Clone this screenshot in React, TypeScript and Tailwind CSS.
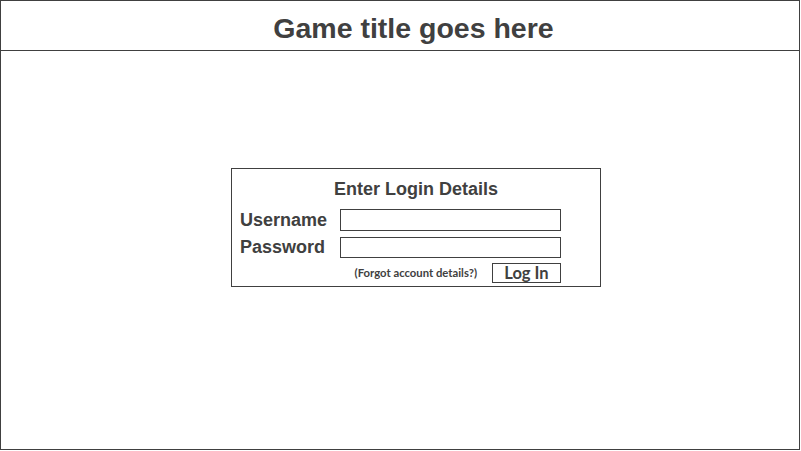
export default function App() {
  return (
    <div className="w-[800px] h-[450px] border border-[#404040] bg-white flex flex-col font-['Liberation_Sans',Arial,sans-serif] text-[#404040]">
      {/* header */}
      <div className="h-[50px] shrink-0 border-b border-[#404040] flex items-center justify-center">
        <h1 className="text-[28.5px] font-bold leading-none pt-[6px] pl-[27px]">Game title goes here</h1>
      </div>

      {/* login panel */}
      <div className="flex-1 pl-[230px] pt-[117px]">
        <div className="w-[370px] h-[119px] border border-[#404040] pl-[8px] pr-[39px] pt-[9px]">
          <div className="text-[18px] font-bold leading-[22px] text-center pl-[31px]">Enter Login Details</div>
          <div className="mt-[9px] flex flex-col gap-[5px]">
            <div className="flex items-center">
              <label className="w-[100px] text-[18px] font-bold leading-[22px]">Username</label>
              <input className="w-[221px] h-[22px] border border-[#404040] outline-none" />
            </div>
            <div className="flex items-center">
              <label className="w-[100px] text-[18px] font-bold leading-[22px]">Password</label>
              <input type="password" className="w-[221px] h-[21px] border border-[#404040] outline-none" />
            </div>
          </div>
          <div className="mt-[5px] flex items-center justify-end gap-[15px] font-['Lato','Open_Sans',sans-serif] font-bold">
            <span className="text-[11.3px] leading-none">(Forgot account details?)</span>
            <button className="w-[69px] h-[20px] border border-[#404040] text-[16.5px] leading-none flex items-center justify-center">Log In</button>
          </div>
        </div>
      </div>
    </div>
  );
}
